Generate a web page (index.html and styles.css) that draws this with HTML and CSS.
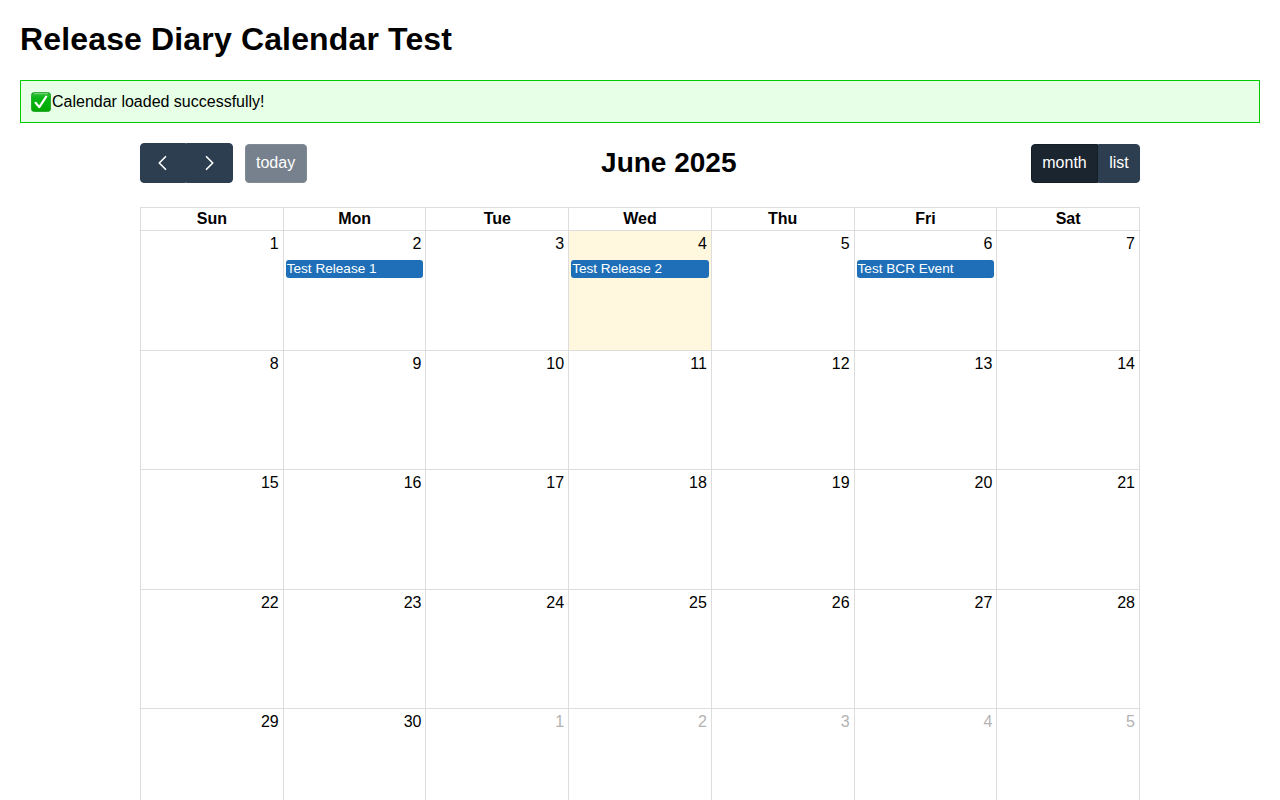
FILE: index.html
```html
<!DOCTYPE html>
<html lang="en">
<head>
<meta charset="utf-8">
<title>Release Diary Calendar Test</title>
<link rel="stylesheet" href="styles.css">
</head>
<body>
<h1>Release Diary Calendar Test</h1>
<div class="status">
  <svg class="check" viewBox="0 0 20 20" aria-hidden="true">
    <defs><linearGradient id="g" x1="0" y1="0" x2="0" y2="1"><stop offset="0" stop-color="#35bd3b"/><stop offset=".3" stop-color="#08b514"/><stop offset="1" stop-color="#00a900"/></linearGradient></defs>
    <rect x=".4" y=".4" width="19.2" height="19.2" rx="3" fill="url(#g)" stroke="#129b1b" stroke-width=".8"/>
    <path d="M3.5 1.7h13" stroke="#7ed782" stroke-width="1" stroke-linecap="round"/>
    <path d="M4.6 10.8l3.7 4.3L15.2 4.6" fill="none" stroke="#fff" stroke-width="2.2" stroke-linecap="round" stroke-linejoin="round"/>
  </svg><span>Calendar loaded successfully!</span>
</div>
<main class="calendar">
  <div class="toolbar">
    <div class="side">
      <div class="group nav">
        <button class="btn" aria-label="Previous"><svg viewBox="0 0 24 24"><path d="M15 4.5L7.5 12l7.5 7.5"/></svg></button>
        <button class="btn" aria-label="Next"><svg viewBox="0 0 24 24"><path d="M9 4.5l7.5 7.5L9 19.5"/></svg></button>
      </div>
      <button class="btn today-btn">today</button>
    </div>
    <h2>June 2025</h2>
    <div class="group views">
      <button class="btn month active">month</button>
      <button class="btn list">list</button>
    </div>
  </div>
  <div class="grid">
    <div class="head">Sun</div><div class="head">Mon</div><div class="head">Tue</div><div class="head">Wed</div><div class="head">Thu</div><div class="head">Fri</div><div class="head">Sat</div>
    <div class="day">1</div><div class="day">2<div class="event">Test Release 1</div></div><div class="day">3</div><div class="day current">4<div class="event">Test Release 2</div></div><div class="day">5</div><div class="day">6<div class="event">Test BCR Event</div></div><div class="day">7</div>
    <div class="day">8</div><div class="day">9</div><div class="day">10</div><div class="day">11</div><div class="day">12</div><div class="day">13</div><div class="day">14</div>
    <div class="day">15</div><div class="day">16</div><div class="day">17</div><div class="day">18</div><div class="day">19</div><div class="day">20</div><div class="day">21</div>
    <div class="day">22</div><div class="day">23</div><div class="day">24</div><div class="day">25</div><div class="day">26</div><div class="day">27</div><div class="day">28</div>
    <div class="day">29</div><div class="day">30</div><div class="day"><span class="other">1</span></div><div class="day"><span class="other">2</span></div><div class="day"><span class="other">3</span></div><div class="day"><span class="other">4</span></div><div class="day"><span class="other">5</span></div>
  </div>
</main>
</body>
</html>
```
FILE: styles.css
```css
* { box-sizing: border-box; }
body {
  margin: 0;
  padding: 20px 20px 0;
  height: 800px;
  overflow: hidden;
  background: #fff;
  color: #000;
  font: 16px/18px "Liberation Sans", Arial, sans-serif;
}
h1 { margin: 0 0 22px; font-size: 32px; line-height: 38px; letter-spacing: .15px; }
.status {
  display: flex;
  align-items: center;
  height: 43px;
  padding: 0 10px;
  background: #e6ffe6;
  border: 1px solid #0c0;
}
.check { width: 20px; height: 20px; margin-right: 1px; }
.calendar { width: 1000px; margin: 20px auto 0; }
.toolbar { display: flex; justify-content: space-between; align-items: center; height: 40px; margin-bottom: 24px; }
.side { display: flex; align-items: center; gap: 12px; }
.group { display: flex; }
h2 { margin: 0; font-size: 28px; line-height: 36px; }
.btn {
  display: flex;
  align-items: center;
  justify-content: center;
  height: 40px;
  padding: 0;
  border: 1px solid #2c3e50;
  border-radius: 4px;
  background: #2c3e50;
  color: #fff;
  font: 16px/24px "Liberation Sans", Arial, sans-serif;
}
.group .btn:first-child { border-radius: 4px 0 0 4px; }
.group .btn:last-child { border-radius: 0 4px 4px 0; }
.nav .btn { width: 46.3px; }
.nav svg { width: 20px; height: 20px; fill: none; stroke: #fff; stroke-width: 2; stroke-linecap: round; stroke-linejoin: round; }
.today-btn { width: 62px; height: 39px; background: #76818d; border-color: #808b96; }
.views .btn { height: 39px; }
.month { width: 67px; }
.list { width: 42px; }
.btn.active { background: #1a252f; border-color: #151e27; }
.grid {
  display: grid;
  grid-template-columns: repeat(7, 1fr);
  grid-template-rows: 23.4px repeat(5, 119.4px);
  border-top: 1px solid #ddd;
  border-left: 1px solid #ddd;
}
.head, .day { border-right: 1px solid #ddd; border-bottom: 1px solid #ddd; min-width: 0; }
.head { padding-top: 2px; text-align: center; font-weight: bold; }
.day { padding: 4px 4px 0 2px; text-align: right; }
.current { background: #fff8df; }
.other { color: #b3b3b3; }
.event {
  height: 18px;
  margin: 7px -2px 0 0;
  padding-left: 1px;
  border-radius: 3px;
  background: #1e6fb8;
  color: #fff;
  font-size: 13.6px;
  line-height: 18px;
  text-align: left;
  white-space: nowrap;
}
```
